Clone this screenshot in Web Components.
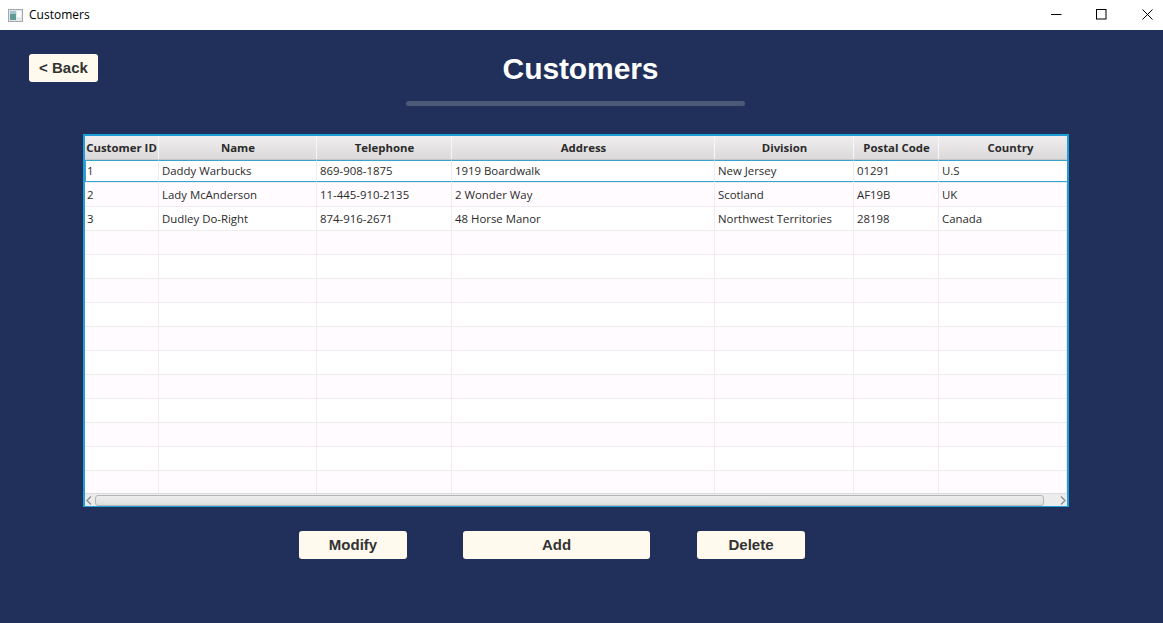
<!DOCTYPE html>
<html>
<head>
<meta charset="utf-8">
<title>Customers</title>
<style>
    html, body { margin: 0; padding: 0; height: 100%; background: #20305a; }
    customers-page { height: 623px; }
</style>
</head>
<body>
<customers-page></customers-page>
<script>
(function () {

    let customers = [
        ["1", "Daddy Warbucks", "869-908-1875", "1919 Boardwalk", "New Jersey", "01291", "U.S"],
        ["2", "Lady McAnderson", "11-445-910-2135", "2 Wonder Way", "Scotland", "AF19B", "UK"],
        ["3", "Dudley Do-Right", "874-916-2671", "48 Horse Manor", "Northwest Territories", "28198", "Canada"]
    ];
    let columns = ["Customer ID", "Name", "Telephone", "Address", "Division", "Postal Code", "Country"];

    class TitleBar extends HTMLElement {
        constructor() {
            super();
            this.attachShadow({ mode: 'open' }).innerHTML = `
                <style>
                    :host {
                        display: flex;
                        align-items: center;
                        height: 30px;
                        background: #fff;
                        color: #000;
                        font: 12px "Open Sans", "Noto Sans", sans-serif;
                    }
                    .app { width: 15px; height: 13px; margin: 0 6px 0 8px; flex: none; }
                    .name { flex: 1; margin-top: -1px; }
                    .ctl { width: 45px; height: 30px; box-sizing: border-box; padding: 9px 0 0 17px; }
                    .ctl svg { display: block; }
                    .ctl.last { width: 39px; padding-left: 18px; }
                </style>
                <svg class="app" viewBox="0 0 15 13">
                    <rect x="0.5" y="0.5" width="14" height="12" fill="#e6e9ec" stroke="#a4a8ae"/>
                    <rect x="2" y="2" width="6" height="9" fill="#5f9a96"/>
                    <rect x="2" y="2" width="6" height="3" fill="#a3c4cf"/>
                    <rect x="9" y="2" width="4" height="6" fill="#fff"/>
                </svg>
                <span class="name"><slot></slot></span>
                <span class="ctl"><svg width="11" height="11" viewBox="0 0 11 11"><path d="M0 5.5H10.5" stroke="#000" fill="none"/></svg></span>
                <span class="ctl"><svg width="11" height="11" viewBox="0 0 11 11"><rect x="0.5" y="0.5" width="9.5" height="9.5" stroke="#000" fill="none"/></svg></span>
                <span class="ctl last"><svg width="11" height="11" viewBox="0 0 11 11"><path d="M0.5 0.5L10.5 10.5M10.5 0.5L0.5 10.5" stroke="#000" fill="none"/></svg></span>
            `;
        }
    }

    class CreamButton extends HTMLElement {
        constructor() {
            super();
            this.attachShadow({ mode: 'open' }).innerHTML = `
                <style>
                    :host {
                        display: flex;
                        align-items: center;
                        justify-content: center;
                        box-sizing: border-box;
                        height: 28px;
                        padding-bottom: 2px;
                        background: #fff9ee;
                        border-radius: 3px;
                        color: #333;
                        font: bold 15px "Liberation Sans", Arial, sans-serif;
                    }
                </style>
                <slot></slot>
            `;
        }
    }

    class CustomerTable extends HTMLElement {
        constructor() {
            super();
            this.attachShadow({ mode: 'open' }).innerHTML = `
                <style>
                    :host {
                        display: block;
                        box-sizing: border-box;
                        width: 986px;
                        height: 373px;
                        border: 2px solid #1f9fd8;
                        background: #fff;
                        color: #2b2b2b;
                        font: 11.4px "Open Sans", "Noto Sans", sans-serif;
                        --cols: 74px 158px 135px 263px 139px 85px 128px;
                    }
                    .head, .row { display: grid; grid-template-columns: var(--cols); }
                    .head {
                        height: 24px;
                        box-sizing: border-box;
                        border-bottom: 1px solid #c8c8c8;
                        background: linear-gradient(#f0eeef, #dbd9da);
                    }
                    .head div {
                        display: flex;
                        align-items: center;
                        justify-content: center;
                        box-sizing: border-box;
                        padding-left: 1px;
                        border-right: 1px solid #f7f7f7;
                        font-weight: 700;
                        white-space: nowrap;
                        overflow: hidden;
                    }
                    .head div:first-child { padding-left: 0; }
                    .head div:last-child { padding-left: 15px; border-right: 0; }
                    .body { height: 333px; overflow: hidden; }
                    .row { height: 24px; box-sizing: border-box; }
                    .row:nth-child(even) { background: #fffbff; }
                    .row div {
                        box-sizing: border-box;
                        padding-left: 3px;
                        line-height: 23px;
                        border-right: 1px solid #eeecee;
                        border-bottom: 1px solid #eeecee;
                        white-space: nowrap;
                    }
                    .row div:first-child { padding-left: 2px; }
                    .row.sel { height: 23px; border-bottom: 1px solid #eeecee; }
                    .row.sel div { height: 22px; line-height: 19px; border-top: 1px solid #35a5d0; border-bottom: 1px solid #35a5d0; }
                    .row.sel div:first-child { border-left: 1px solid #35a5d0; padding-left: 1px; }
                    .row.sel div:last-child { border-right: 0; }
                    .bar {
                        display: flex;
                        align-items: center;
                        height: 12px;
                        background: #ececec;
                        border-top: 1px solid #dcdcdc;
                    }
                    .arrow { flex: none; display: flex; }
                    .arrow.left { width: 9px; padding-left: 1px; }
                    .arrow.right { width: 23px; padding-left: 16px; box-sizing: border-box; }
                    .thumb {
                        flex: 1;
                        height: 9px;
                        border: 1px solid #b4b4b4;
                        border-radius: 3px;
                        background: linear-gradient(#eeeeee, #dedede);
                    }
                </style>
                <div class="head"></div>
                <div class="body"></div>
                <div class="bar">
                    <span class="arrow left"><svg width="6" height="9" viewBox="0 0 6 9"><path d="M5 0.5L1 4.5L5 8.5" stroke="#8a8a8a" stroke-width="1.2" fill="none"/></svg></span>
                    <span class="thumb"></span>
                    <span class="arrow right"><svg width="6" height="9" viewBox="0 0 6 9"><path d="M1 0.5L5 4.5L1 8.5" stroke="#8a8a8a" stroke-width="1.2" fill="none"/></svg></span>
                </div>
            `;
            this.head = this.shadowRoot.querySelector(".head");
            this.rows = this.shadowRoot.querySelector(".body");
        }

        connectedCallback() {
            for (let name of columns) {
                let cell = document.createElement('div');
                cell.textContent = name;
                this.head.appendChild(cell);
            }
            for (let i = 0; i < 14; i++) {
                let row = document.createElement('div');
                row.className = i === 0 ? "row sel" : "row";
                for (let c = 0; c < columns.length; c++) {
                    let cell = document.createElement('div');
                    cell.textContent = customers[i] ? customers[i][c] : "";
                    row.appendChild(cell);
                }
                this.rows.appendChild(row);
            }
        }
    }

    class CustomersPage extends HTMLElement {
        constructor() {
            super();
            this.attachShadow({ mode: 'open' }).innerHTML = `
                <style>
                    :host { display: block; background: #20305a; }
                    .top {
                        display: grid;
                        grid-template-columns: 69px 1fr;
                        padding: 24px 0 0 29px;
                        height: 80px;
                    }
                    .top cream-button { height: 28px; }
                    h1 {
                        margin: -7px 0 0;
                        padding-right: 100px;
                        text-align: center;
                        color: #fff;
                        letter-spacing: -0.1px;
                        font: bold 30px/44px "Liberation Sans", Arial, sans-serif;
                    }
                    .rule {
                        width: 339px;
                        height: 5px;
                        margin: 10px 0 0 308px;
                        border-radius: 3px;
                        background: #4b5878;
                    }
                    .table { padding-left: 83px; }
                    .actions { display: flex; padding: 24px 0 0 299px; }
                    .actions cream-button { width: 108px; }
                    .actions .add { width: 187px; margin: 0 47px 0 56px; }
                </style>
                <title-bar>Customers</title-bar>
                <div class="top">
                    <cream-button>&lt; Back</cream-button>
                    <div>
                        <h1>Customers</h1>
                        <div class="rule"></div>
                    </div>
                </div>
                <div class="table"><customer-table></customer-table></div>
                <div class="actions">
                    <cream-button>Modify</cream-button>
                    <cream-button class="add">Add</cream-button>
                    <cream-button>Delete</cream-button>
                </div>
            `;
        }
    }

    customElements.define('title-bar', TitleBar);
    customElements.define('cream-button', CreamButton);
    customElements.define('customer-table', CustomerTable);
    customElements.define('customers-page', CustomersPage);

})();
</script>
</body>
</html>
